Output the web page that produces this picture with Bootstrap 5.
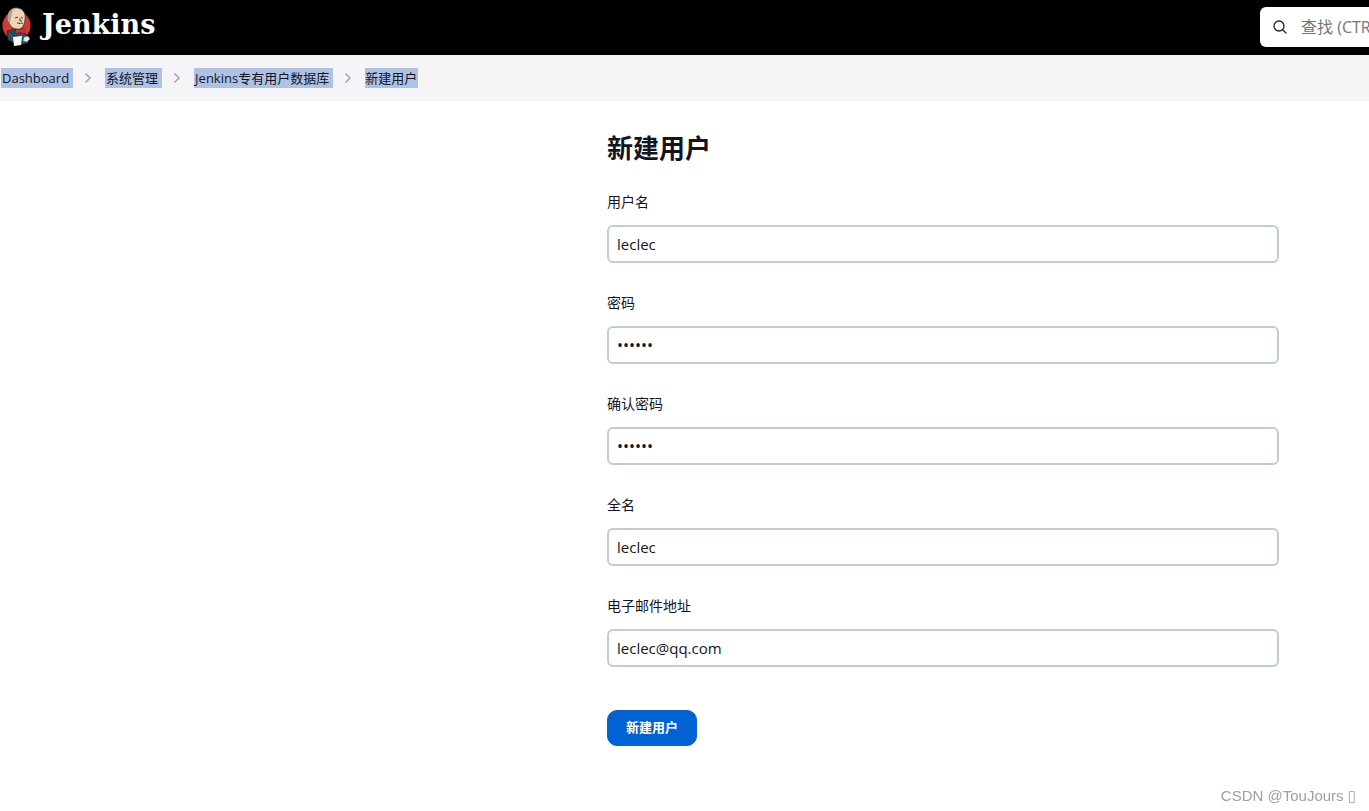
<!DOCTYPE html>
<html lang="zh-CN">
<head>
<meta charset="utf-8">
<meta name="viewport" content="width=device-width, initial-scale=1">
<title>新建用户 [Jenkins]</title>
<link href="https://cdn.jsdelivr.net/npm/bootstrap@5.3.0/dist/css/bootstrap.min.css" rel="stylesheet">
<style>
body { font-family: "Open Sans", "Noto Sans CJK SC", sans-serif; color: #14141f; font-size: 14px; background: #fff; }
.topbar { height: 55px; background: #000; padding-bottom: 2px; }
.brand-name { font-family: "DejaVu Serif", serif; font-weight: 700; font-size: 27px; line-height: 32px; padding-bottom: 4px; }
.search-box { flex: 0 0 109px; height: 40px; border-radius: 6px 0 0 6px; gap: 14px; padding-left: 13px; }
.search-box input { font-size: 16px; flex: 0 0 200px; color: #333; }
.search-box input::placeholder { color: #757575; opacity: 1; }
.crumbs { height: 46px; background: #f5f5f8; padding-left: 1px; }
.crumbs .breadcrumb { font-size: 13px; line-height: 20px; }
.crumbs a { display: block; color: #14141f; background: #adc2e5; padding: 0 4px 0 1px; }
.crumbs li:last-child a { padding: 0 1px 0 0; }
.crumbs svg { margin: 0 11px; }
.user-form { width: 50%; max-width: 672px; margin-right: 90px; padding-top: 31px; }
.user-form h1 { font-size: 26px; line-height: 32px; font-weight: 700; margin-bottom: 28px; }
.user-form .form-label { display: block; line-height: 20px; margin-bottom: 13px; }
.field { margin-bottom: 30px; }
.user-form .form-control { height: 38px; border: 2px solid #c1cdd1; border-radius: 6px; padding: 0 8px; font-size: 15px; color: #14141f; }
.user-form .form-control[type="password"] { font-size: 16px; }
.btn-create { --bs-btn-bg: #0062d3; --bs-btn-border-color: #0062d3; --bs-btn-hover-bg: #0056ba; width: 90px; height: 36px; border-radius: 10px; font-size: 13px; font-weight: 700; padding: 0; margin-top: 13px; }
.credit { font-family: "Liberation Sans", "DejaVu Sans", sans-serif; font-size: 15px; line-height: 18px; color: #a0a0a0; right: 13px; bottom: 6px; }
</style>
</head>
<body>
<header class="topbar d-flex align-items-center overflow-hidden">
  <a href="#" class="d-flex align-items-center text-white text-decoration-none">
    <svg width="34" height="42" viewBox="0 0 34 42" aria-hidden="true">
      <ellipse cx="16.500" cy="19.500" rx="14" ry="14.500" fill="#d33833"/>
      <path d="M7 25l7-2 7 3 5 2 2 9-9 2-11-5z" fill="#2f4a5c" stroke="#14242e" stroke-width=".6"/>
      <path d="M8 11C8 4 13 1 18 2c6 1 8 6 7 12-1 7-4 10-9 9-5-1-8-5-8-12z" fill="#efd4b6" stroke="#3b2d28" stroke-width=".8"/>
      <path d="M8 16C6 9 9 3 15 2c-4 3-3 7-4 10l-1 5z" fill="#aaa59b"/>
      <path d="M15 12l3-1m3 0l2 1M17 17q4 1 6 0M20 12v3l2 0" fill="none" stroke="#54372e" stroke-width="1"/>
      <path d="M16 23l4 1 4-2v6l-4-2-4 2z" fill="#d33833" stroke="#7c1d1d" stroke-width=".6"/>
      <path d="M9 28l6 5M22 29l-2 3" stroke="#6d8998" stroke-width=".6"/>
      <path d="M13 31l9-1-1 9-7 1z" fill="#fff"/>
      <path d="M24 31l4-1 2 3-3 3-4-1z" fill="#e9e9e4" stroke="#536670" stroke-width=".6"/>
    </svg>
    <span class="brand-name ms-2">Jenkins</span>
  </a>
  <label class="search-box ms-auto bg-white d-flex align-items-center overflow-hidden">
    <svg class="flex-shrink-0" width="14" height="14" viewBox="0 0 14 14" fill="none" stroke="#22222c" stroke-width="1.300" stroke-linecap="round" aria-hidden="true"><circle cx="6" cy="6" r="5"/><path d="M9.700 9.700L13 13"/></svg>
    <input class="border-0 p-0" type="search" placeholder="查找 (CTRL+K)" aria-label="查找">
  </label>
</header>
<nav class="crumbs d-flex align-items-center" aria-label="breadcrumb">
  <ol class="breadcrumb flex-nowrap align-items-center m-0">
    <li><a href="#" class="text-decoration-none">Dashboard</a></li>
    <li class="d-flex"><svg width="10" height="12" viewBox="0 0 10 12" fill="none" stroke="#a4a4b5" stroke-width="1.500"><path d="M1.500 1.500L6 6l-4.500 4.500"/></svg></li>
    <li><a href="#" class="text-decoration-none">系统管理</a></li>
    <li class="d-flex"><svg width="10" height="12" viewBox="0 0 10 12" fill="none" stroke="#a4a4b5" stroke-width="1.500"><path d="M1.500 1.500L6 6l-4.500 4.500"/></svg></li>
    <li><a href="#" class="text-decoration-none">Jenkins专有用户数据库</a></li>
    <li class="d-flex"><svg width="10" height="12" viewBox="0 0 10 12" fill="none" stroke="#a4a4b5" stroke-width="1.500"><path d="M1.500 1.500L6 6l-4.500 4.500"/></svg></li>
    <li><a href="#" class="text-decoration-none">新建用户</a></li>
  </ol>
</nav>
<main>
  <form class="user-form ms-auto">
    <h1>新建用户</h1>
    <div class="field"><label class="form-label" for="username">用户名</label><input class="form-control" id="username" type="text" value="leclec"></div>
    <div class="field"><label class="form-label" for="password">密码</label><input class="form-control" id="password" type="password" value="leclec"></div>
    <div class="field"><label class="form-label" for="confirm">确认密码</label><input class="form-control" id="confirm" type="password" value="leclec"></div>
    <div class="field"><label class="form-label" for="fullname">全名</label><input class="form-control" id="fullname" type="text" value="leclec"></div>
    <div class="field"><label class="form-label" for="email">电子邮件地址</label><input class="form-control" id="email" type="email" value="leclec@qq.com"></div>
    <button class="btn btn-primary btn-create" type="button">新建用户</button>
  </form>
</main>
<div class="credit position-fixed">CSDN @TouJours ▯</div>
<script src="https://cdn.jsdelivr.net/npm/bootstrap@5.3.0/dist/js/bootstrap.bundle.min.js"></script>
</body>
</html>
